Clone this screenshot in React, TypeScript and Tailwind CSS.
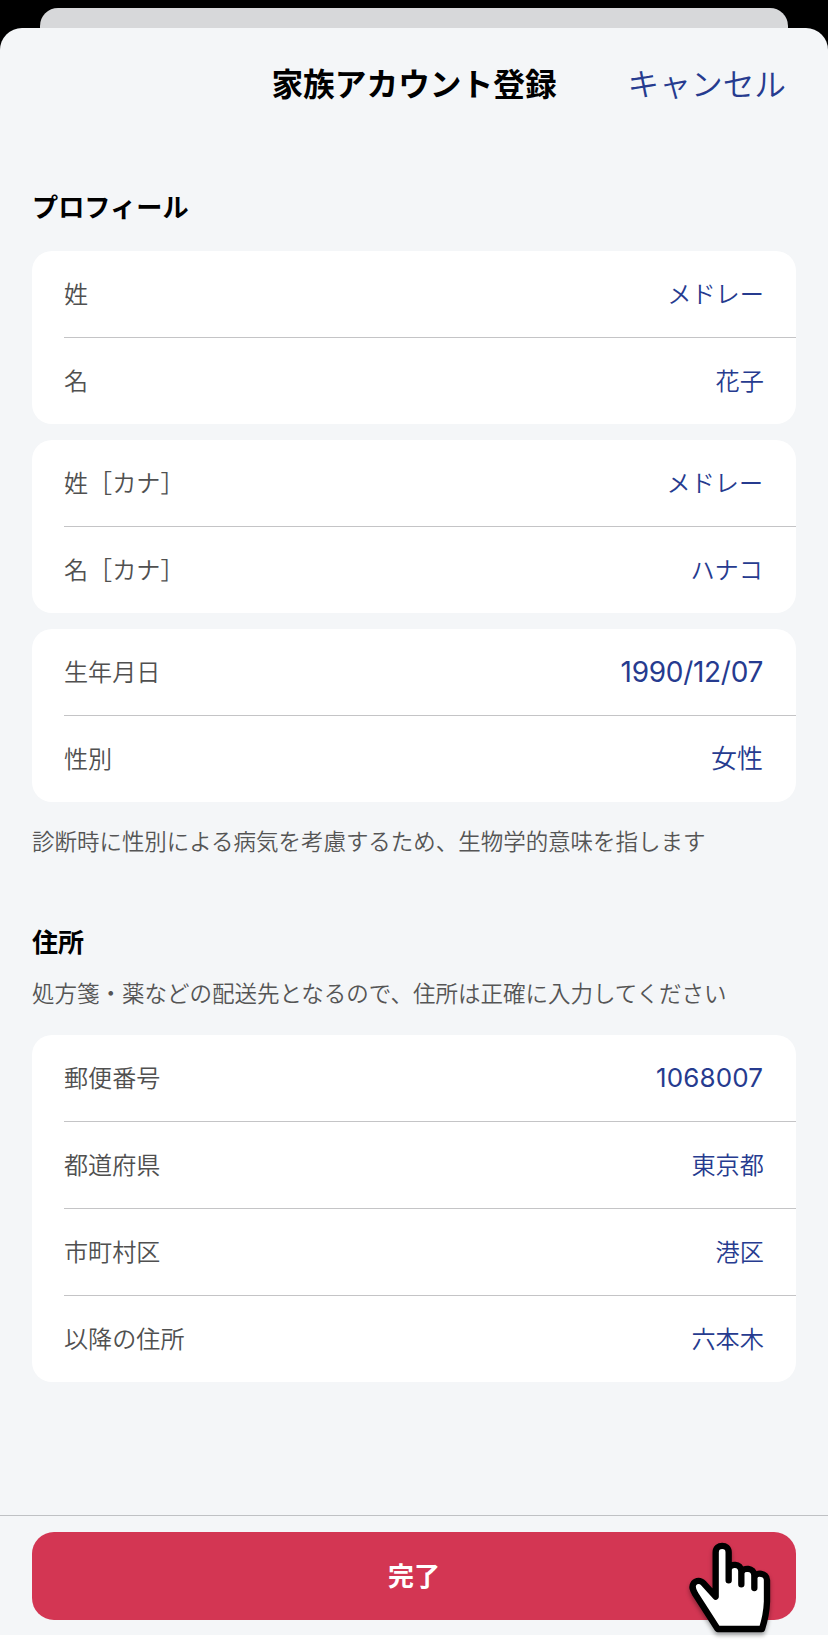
import React from 'react';

type Field = {
  label: string;
  value: string;
  valueClass?: string;
};

const names: Field[] = [
  { label: '姓', value: 'メドレー' },
  { label: '名', value: '花子' },
];

const kana: Field[] = [
  { label: '姓［カナ］', value: 'メドレー', valueClass: 'mr-px text-[24.1px] font-[350]' },
  { label: '名［カナ］', value: 'ハナコ', valueClass: 'mr-px text-[24.2px] font-[350]' },
];

const personal: Field[] = [
  { label: '生年月日', value: '1990/12/07', valueClass: 'mr-px mb-0.5 text-[28px] tracking-[-0.3px]' },
  { label: '性別', value: '女性', valueClass: 'mr-px mb-0.5 text-[26px] font-[350]' },
];

const address: Field[] = [
  { label: '郵便番号', value: '1068007', valueClass: 'mr-px mb-0.5 text-[26px] tracking-[0.1px]' },
  { label: '都道府県', value: '東京都' },
  { label: '市町村区', value: '港区' },
  { label: '以降の住所', value: '六本木' },
];

function FieldCard({ fields }: { fields: Field[] }) {
  return (
    <dl className="overflow-hidden rounded-[20px] bg-white pl-8">
      {fields.map((field, i) => (
        <div
          key={field.label}
          className={
            i > 0
              ? 'flex h-[87px] items-center justify-between border-t border-[#c4c4c6] pt-0.5 pr-8'
              : 'flex h-[86px] items-center justify-between pt-0.5 pr-8'
          }
        >
          <dt className="text-[24.1px] leading-none font-[350] text-[#505050]">{field.label}</dt>
          <dd className={`leading-none text-[#263b8f] ${field.valueClass ?? 'text-[24.2px] font-[350]'}`}>
            {field.value}
          </dd>
        </div>
      ))}
    </dl>
  );
}

function HandPointer() {
  return (
    <svg
      className="pointer-events-none absolute top-[24px] left-[686px] h-[100px] w-[88px] drop-shadow-[0_3px_2px_rgba(0,0,0,0.35)]"
      viewBox="138 120 264 300"
      aria-hidden="true"
    >
      <path
        d="M227 290V157C227 131 266 131 266 157V241V208C268 189 304 189 304 214V253V218C308 201 343 202 343 226V264V232C348 215 381 218 381 240V305C380 332 374 362 366 387H233L166 283C158 269 154 260 161 250C169 240 182 240 191 250Z"
        fill="white"
        stroke="black"
        strokeWidth="19"
        strokeLinecap="round"
        strokeLinejoin="round"
      />
    </svg>
  );
}

export default function App() {
  return (
    <div className="flex h-[1641px] w-[828px] flex-col overflow-hidden bg-white font-['Inter','Noto_Sans_CJK_JP',sans-serif]" lang="ja">
      <div className="bg-black pt-2">
        <div className="mx-10 h-5 rounded-t-[18px] bg-[#d7d8da]" />
      </div>
      <div className="flex h-[1607px] shrink-0 flex-col bg-black">
        <div className="flex grow flex-col rounded-t-[22px] bg-[#f4f6f8]">
          <header className="grid h-[112px] grid-cols-[1fr_auto_1fr] items-center px-[42px] pt-0.5">
            <h1 className="col-start-2 text-[31.7px] leading-none font-bold text-black">家族アカウント登録</h1>
            <button className="justify-self-end text-[31.7px] leading-none font-[350] text-[#263b8f]">キャンセル</button>
          </header>

          <main className="flex h-[1375px] flex-col px-8">
            <h2 className="mt-[55px] text-[26.2px] leading-[26px] font-bold text-black">プロフィール</h2>
            <div className="mt-[30px] flex flex-col gap-4">
              <FieldCard fields={names} />
              <FieldCard fields={kana} />
              <FieldCard fields={personal} />
            </div>
            <p className="mt-[28px] text-[22.47px] leading-[24px] font-[350] whitespace-nowrap text-[#555555]">
              診断時に性別による病気を考慮するため、生物学的意味を指します
            </p>

            <h2 className="mt-[76px] text-[26px] leading-[26px] font-bold text-black">住所</h2>
            <p className="mt-[26px] mb-[29px] text-[22.5px] leading-[24px] font-[350] whitespace-nowrap text-[#555555]">
              処方箋・薬などの配送先となるので、住所は正確に入力してください
            </p>
            <FieldCard fields={address} />
          </main>

          <footer className="relative h-[120px] border-t border-[#bfc1c4] px-8 pt-4">
            <button className="h-[88px] w-full rounded-[22px] bg-[#d33653] pt-0.5 text-[26px] leading-none font-bold text-white">
              完了
            </button>
            <HandPointer />
          </footer>
        </div>
      </div>
    </div>
  );
}
